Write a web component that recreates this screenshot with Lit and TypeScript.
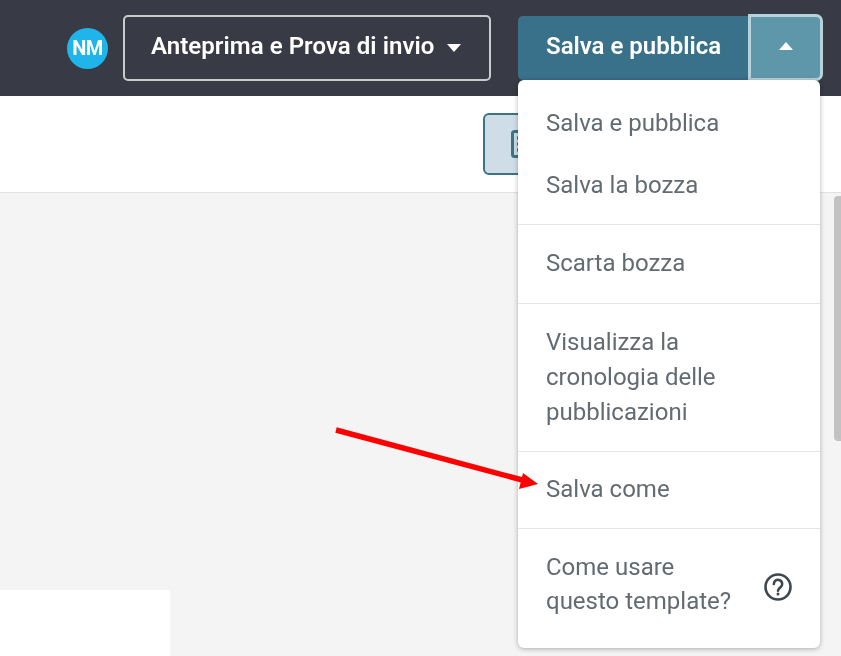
import { LitElement, html, css } from "lit";
import { customElement } from "lit/decorators.js";

@customElement("app-root")
export class AppRoot extends LitElement {
  static styles = css`
    :host { display: block; position: relative; width: 841px; height: 656px; overflow: hidden; font-family: Roboto, "Liberation Sans", sans-serif; background: #f4f4f4; filter: blur(0.35px); }
    * { box-sizing: border-box; }
    .top { height: 96px; background: #383b45; display: flex; align-items: center; padding: 0 18px 0 67px; }
    .avatar { width: 41px; height: 41px; border-radius: 50%; background: #1fb5ea; color: #fff; font-weight: 700; font-size: 20px; display: flex; align-items: center; justify-content: center; letter-spacing: -0.5px; }
    .preview { margin-left: 15px; width: 368px; height: 66px; border: 2px solid #c9cbd0; border-radius: 5px; color: #fff; font-size: 24px; font-weight: 600; letter-spacing: 0.05px; display: flex; align-items: center; padding: 0 0 3px 26px; gap: 13px; margin-top: -1px; }
    .caret { width: 0; height: 0; border-left: 7.5px solid transparent; border-right: 7.5px solid transparent; border-top: 8.5px solid #fff; margin-top: 3px; }
    .caret.up { border-top: 0; border-bottom: 8.5px solid #fff; margin-top: 0; }
    .save { margin-left: 27px; width: 230px; height: 64px; background: #39708a; border-radius: 5px 0 0 5px; color: #fff; font-size: 24px; font-weight: 600; display: flex; align-items: center; padding: 0 0 4px 28px; }
    .save-caret { width: 75px; height: 67px; margin-top: -1px; background: #5e97a9; border: 3px solid #b8d2dc; border-radius: 0 7px 7px 0; display: flex; align-items: center; justify-content: center; padding-bottom: 3px; }
    .toolbar { height: 97px; background: #fff; border-bottom: 1px solid #e2e2e2; padding: 17px 0 0 483px; }
    .doc { width: 60px; height: 62px; background: #cfdee6; border: 2px solid #3c7487; border-radius: 6px; display: flex; align-items: center; padding-left: 26px; }
    .body { height: 463px; display: flex; flex-direction: column; justify-content: flex-end; }
    .block { width: 170px; height: 66px; background: #fff; }
    .thumb { position: absolute; left: 834px; top: 196px; width: 7px; height: 245px; background: #c2c2c2; border-radius: 4px 0 0 4px; }
    .menu { position: absolute; left: 518px; top: 80px; width: 302px; height: 568px; background: #fff; border-radius: 6px; box-shadow: 0 1px 5px rgba(0,0,0,.3); color: #636b72; font-size: 24px; line-height: 35px; padding-top: 12px; }
    .group { border-bottom: 1px solid #e4e5e7; padding-bottom: 8px; }
    .g2 { padding: 7px 0 9px; }
    .g3 { padding: 7px 0 8px; }
    .g4 { padding: 6px 0 8px; }
    .last { border: 0; display: flex; align-items: center; justify-content: space-between; padding: 7px 27px 0 0; line-height: 34.5px; }
    .last svg { margin-top: 6px; }
    .item { padding: 13.5px 28px; }
    .arrow { position: absolute; left: 330px; top: 420px; }
  `;
  render() {
    return html`
      <div class="top">
        <div class="avatar">NM</div>
        <div class="preview">Anteprima e Prova di invio <span class="caret"></span></div>
        <div class="save">Salva e pubblica</div>
        <div class="save-caret"><span class="caret up"></span></div>
      </div>
      <div class="toolbar">
        <div class="doc">
          <svg width="24" height="28" viewBox="0 0 24 28" fill="none" stroke="#3c7487" stroke-width="3"><rect x="1.5" y="1.5" width="21" height="25" rx="2"/><path d="M6 8h3M6 14h3M6 20h3" stroke="#3f6678"/></svg>
        </div>
      </div>
      <div class="body"><div class="block"></div></div>
      <div class="thumb"></div>
      <div class="menu">
        <div class="group">
          <div class="item">Salva e pubblica</div>
          <div class="item">Salva la bozza</div>
        </div>
        <div class="group g2"><div class="item">Scarta bozza</div></div>
        <div class="group g3"><div class="item">Visualizza la<br />cronologia delle<br />pubblicazioni</div></div>
        <div class="group g4"><div class="item">Salva come</div></div>
        <div class="group last">
          <div class="item">Come usare<br />questo template?</div>
          <svg width="30" height="30" viewBox="0 0 30 30" fill="none" stroke="#3f474d" stroke-width="2.6"><circle cx="15" cy="15" r="12.5"/><path d="M10.8 12a4.2 4.2 0 1 1 6.6 3.4c-1.6 1.1-2.4 1.8-2.4 3.4" stroke-linecap="round"/><circle cx="15" cy="22" r="1.5" fill="#3f474d" stroke="none"/></svg>
        </div>
      </div>
      <svg class="arrow" width="215" height="80" viewBox="330 420 215 80">
        <path d="M336 430 L526 481" stroke="#fe0000" stroke-width="5.5" fill="none"/>
        <path d="M538 484 L523 473 L519 489 Z" fill="#fe0000"/>
      </svg>
    `;
  }
}
